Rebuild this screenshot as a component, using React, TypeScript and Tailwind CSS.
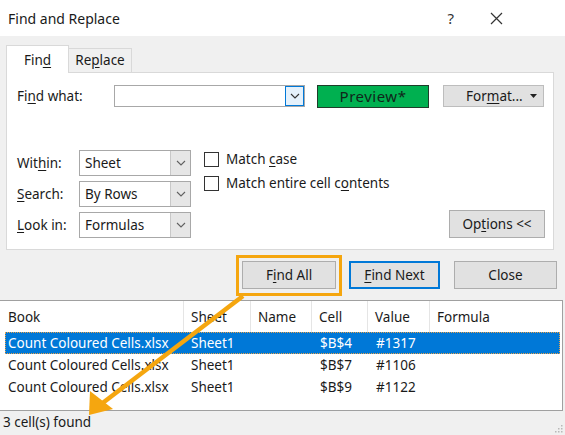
import React from "react";

const U = ({ children }: { children: React.ReactNode }) => (
  <span className="underline underline-offset-2 decoration-1">{children}</span>
);

const Chevron = ({ color = "#606060" }: { color?: string }) => (
  <svg width="10" height="6" viewBox="0 0 10 6">
    <path d="M1 1 L5 5 L9 1" fill="none" stroke={color} strokeWidth="1.1" />
  </svg>
);

const Select = ({ value }: { value: string }) => (
  <div className="flex h-[26px] w-[112px] items-stretch border border-[#a8a8a8] bg-white">
    <div className="flex flex-1 items-center pl-[5px] text-[13.5px] text-[#1a1a1a]">{value}</div>
    <div className="flex w-[20px] items-center justify-center border-l border-[#c8c8c8] bg-[#e6e6e6]">
      <Chevron />
    </div>
  </div>
);

const Checkbox = ({ children }: { children: React.ReactNode }) => (
  <div className="flex h-[24px] items-center gap-[7px]">
    <div className="h-[15px] w-[15px] border border-[#333] bg-white" />
    <span className="text-[13.5px] text-[#1a1a1a]">{children}</span>
  </div>
);

const rows = [
  { book: "Count Coloured Cells.xlsx", sheet: "Sheet1", cell: "$B$4", value: "#1317" },
  { book: "Count Coloured Cells.xlsx", sheet: "Sheet1", cell: "$B$7", value: "#1106" },
  { book: "Count Coloured Cells.xlsx", sheet: "Sheet1", cell: "$B$9", value: "#1122" },
];

const cols = [
  { label: "Book", w: 184 },
  { label: "Sheet", w: 67 },
  { label: "Name", w: 61 },
  { label: "Cell", w: 56 },
  { label: "Value", w: 62 },
  { label: "Formula", w: 132 },
];

export default function App() {
  return (
    <div
      className="relative h-[435px] w-[565px] overflow-hidden bg-[#f0f0f0] text-[13.5px] text-[#1a1a1a]"
      style={{ fontFamily: '"Noto Sans", "Open Sans", sans-serif' }}
    >
      {/* Title bar */}
      <div className="flex h-[36px] items-center bg-white pl-[8px]">
        <span className="text-[14px] text-[#1a1a1a]">Find and Replace</span>
        <span className="ml-auto mr-[36px] text-[15px] text-[#333]">?</span>
        <svg className="mr-[62px]" width="13" height="13" viewBox="0 0 13 13">
          <path d="M1 1 L12 12 M12 1 L1 12" stroke="#333" strokeWidth="1.2" />
        </svg>
      </div>

      {/* Tabs + panel */}
      <div className="px-[6px] pt-[9px]">
        <div className="flex h-[27px] items-end">
          <div className="relative z-10 -mb-px flex h-[28px] w-[63px] items-center justify-center border border-b-0 border-[#d9d9d9] bg-white pt-[2px]">
            Fin<U>d</U>
          </div>
          <div className="flex h-[24px] w-[63px] items-center justify-center border border-b-0 border-l-0 border-[#d9d9d9] bg-[#f0f0f0]">
            Re<U>p</U>lace
          </div>
        </div>
        <div className="flex h-[178px] w-[548px] flex-col border border-[#d9d9d9] bg-white pl-[10px] pr-[8px] pt-[12px]">
          {/* Find what row */}
          <div className="flex h-[22px] items-center">
            <span className="w-[97px]">
              Fi<U>n</U>d what:
            </span>
            <div className="flex h-[22px] w-[191px] items-stretch border border-[#a8a8a8] bg-white">
              <div className="flex-1" />
              <div className="flex w-[19px] items-center justify-center border border-[#0078d7] bg-[#e5f1fb]">
                <Chevron color="#333" />
              </div>
            </div>
            <div className="ml-[12px] flex h-[23px] w-[112px] items-center justify-center border border-[#1f3d2a] bg-[#00b050] text-[15px] tracking-[0.5px] text-[#10261a]">
              Preview*
            </div>
            <div className="ml-[14px] flex h-[22px] w-[101px] items-center border border-[#bdbdbd] bg-[#e1e1e1] pl-[22px]">
              For<U>m</U>at...
              <svg className="ml-auto mr-[6px]" width="7" height="4" viewBox="0 0 7 4">
                <path d="M0 0 L7 0 L3.5 4 Z" fill="#222" />
              </svg>
            </div>
          </div>

          {/* Lower section */}
          <div className="mt-[43px] flex">
            <div className="flex flex-col gap-[5px]">
              <div className="flex h-[26px] items-center">
                <span className="w-[62px]">
                  Wit<U>h</U>in:
                </span>
                <Select value="Sheet" />
              </div>
              <div className="flex h-[26px] items-center">
                <span className="w-[62px]">
                  <U>S</U>earch:
                </span>
                <Select value="By Rows" />
              </div>
              <div className="flex h-[26px] items-center">
                <span className="w-[62px]">
                  <U>L</U>ook in:
                </span>
                <Select value="Formulas" />
              </div>
            </div>
            <div className="-mt-[3px] ml-[13px] flex flex-col">
              <Checkbox>
                Match <U>c</U>ase
              </Checkbox>
              <Checkbox>
                Match entire cell c<U>o</U>ntents
              </Checkbox>
            </div>
            <div className="ml-auto flex h-[28px] w-[96px] items-center justify-center self-end border border-[#adadad] bg-[#e1e1e1]">
              Op<U>t</U>ions &lt;&lt;
            </div>
          </div>
        </div>
      </div>

      {/* Buttons row */}
      <div className="flex h-[50px] items-center">
        <div className="ml-[236px] flex h-[41px] w-[106px] items-center justify-center border-[3px] border-[#f5a60f]">
          <div className="flex h-[28px] w-[94px] items-center justify-center border border-[#adadad] bg-[#e1e1e1]">
            F<U>i</U>nd All
          </div>
        </div>
        <div className="ml-[7px] flex h-[28px] w-[91px] items-center justify-center border-2 border-[#0078d7] bg-[#e1e1e1]">
          <U>F</U>ind Next
        </div>
        <div className="ml-[14px] flex h-[28px] w-[103px] items-center justify-center border border-[#adadad] bg-[#e1e1e1]">
          Close
        </div>
      </div>

      {/* Results list */}
      <div className="mr-[2px] h-[111px] border border-l-0 border-[#a0a0a0] bg-white">
        <div className="flex h-[31px]">
          {cols.map((c, i) => (
            <div
              key={c.label}
              className={`flex items-center pt-[2px] ${i < cols.length - 1 ? "border-r border-[#e5e5e5]" : ""} ${i === 0 ? "pl-[8px]" : "pl-[7px]"}`}
              style={{ width: c.w }}
            >
              {c.label}
            </div>
          ))}
        </div>
        <div className="flex flex-col">
          {rows.map((r, i) => (
            <div
              key={i}
              className={`ml-[5px] mr-[2px] flex h-[22px] items-center ${
                i === 0
                  ? "border border-dotted border-[#e8a24a] bg-[#0078d7] text-white"
                  : "border border-transparent text-[#1a1a1a]"
              }`}
            >
              <span className="w-[178px] pl-[2px]">{r.book}</span>
              <span className="w-[129px] pl-[7px]">{r.sheet}</span>
              <span className="w-[56px] pl-[7px]">{r.cell}</span>
              <span className="pl-[7px]">{r.value}</span>
            </div>
          ))}
        </div>
      </div>

      {/* Status bar */}
      <div className="flex h-[22px] items-center pl-[3px]">3 cell(s) found</div>
      <svg className="absolute bottom-[2px] right-[2px]" width="10" height="10" viewBox="0 0 10 10">
        {[
          [8, 2],
          [8, 5],
          [5, 5],
          [8, 8],
          [5, 8],
          [2, 8],
        ].map(([x, y], i) => (
          <rect key={i} x={x} y={y} width="1.5" height="1.5" fill="#b8b8b8" />
        ))}
      </svg>

      {/* Orange arrow overlay */}
      <svg className="pointer-events-none absolute left-0 top-0" width="565" height="435" viewBox="0 0 565 435">
        <line x1="243" y1="296" x2="100" y2="405" stroke="#f5a60f" strokeWidth="4.5" />
        <polygon points="89,415 90,391 113,409" fill="#f5a60f" />
      </svg>
    </div>
  );
}
